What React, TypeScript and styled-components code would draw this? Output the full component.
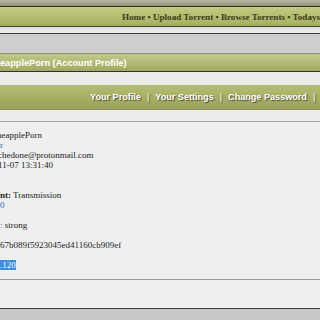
import React from 'react'
import styled, { createGlobalStyle } from 'styled-components'

const GlobalStyle = createGlobalStyle`
	html, body {
		margin: 0;
		padding: 0;
		background: #efefef;
		overflow: hidden;
	}
`

const Page = styled.div`
	width: 320px;
	height: 320px;
	overflow: hidden;
	display: flex;
	flex-direction: column;
	background: #efefef;
`
const TopShade = styled.div`
	height: 6px;
	background: linear-gradient(#b7b8a6, #8e9078);
	border-bottom: 1px solid #2e2e26;
`
const MainNav = styled.nav`
	height: 19px;
	display: flex;
	align-items: center;
	padding-left: 122px;
	white-space: nowrap;
	background: linear-gradient(#c3ca82, #b3bb6c 60%, #a6ae5e);
	border-bottom: 1px solid #45452f;
	font-family: 'Liberation Serif', serif;
	font-weight: bold;
	font-size: 9.1px;
	color: #3a3a22;
`
const Strip = styled.div`
	height: 6px;
	background: linear-gradient(#dcdcdc, #f0f0f0);
	border-bottom: 1px solid #3c3c3c;
`
const GrayBar = styled.div`
	height: 19px;
	background: #cecece;
	border-bottom: 1px solid #8a8b78;
`
const TitleBar = styled.h1`
	margin: 0;
	height: 17px;
	display: flex;
	align-items: center;
	white-space: nowrap;
	background: linear-gradient(#c2c98a, #b0b872 55%, #a1a862);
	border-bottom: 1px solid #33332a;
	font-family: 'Liberation Sans', sans-serif;
	font-size: 9.2px;
	font-weight: bold;
	color: #fff;
`
const Spacer = styled.div<{ $h: number }>`
	height: ${p => p.$h}px;
	background: #ececec;
`
const LinksBar = styled.div`
	height: 24px;
	display: flex;
	align-items: center;
	gap: 6px;
	padding-left: 90px;
	white-space: nowrap;
	background: linear-gradient(#b6be74, #a7af65 50%, #9aa25a);
	border-bottom: 1px solid #8c9262;
	font-family: 'Liberation Sans', sans-serif;
	font-size: 9.1px;
	font-weight: bold;
	color: #fff;
	text-shadow: 1px 1px 1px #4a4a30;
`
const Sep = styled.span`
	font-weight: normal;
`
const Content = styled.div`
	border-top: 1px solid #a9a9a9;
	border-bottom: 1px solid #9a9a9a;
	padding: 8px 0 9px;
	font-family: 'Liberation Serif', serif;
	font-size: 9px;
	line-height: 10px;
	color: #222;
`
const Line = styled.div<{ $shift?: number }>`
	height: 10px;
	white-space: nowrap;
	margin-left: ${p => -(p.$shift ?? 0)}px;
`
const Link = styled.span`
	color: #2b5fae;
`
const Selected = styled.span`
	background: #3a8ee4;
	color: #fff;
`
const Filler = styled.div`
	flex: 1;
	border-bottom: 1px solid #3e3e3e;
`
const Footer = styled.div`
	height: 11px;
	background: #c8c8c8;
`

const App: React.FC = () => {
	return (
		<Page>
			<GlobalStyle />
			<TopShade />
			<MainNav>Home • Upload Torrent • Browse Torrents • Todays Torrents • Forums</MainNav>
			<Strip />
			<GrayBar />
			<TitleBar>eapplePorn (Account Profile)</TitleBar>
			<Spacer $h={13} />
			<LinksBar>
				<span>Your Profile</span>
				<Sep>|</Sep>
				<span>Your Settings</span>
				<Sep>|</Sep>
				<span>Change Password</span>
				<Sep>|</Sep>
				<span>Your Torrents</span>
			</LinksBar>
			<Spacer $h={11} />
			<Content>
				<Line $shift={3}>neapplePorn</Line>
				<Line>
					<Link>r</Link>
				</Line>
				<Line $shift={2}>chedone@protonmail.com</Line>
				<Line $shift={2}>11-07 13:31:40</Line>
				<Line />
				<Line />
				<Line>
					<b>nt:</b> Transmission
				</Line>
				<Line>
					<Link>0</Link>
				</Line>
				<Line />
				<Line>
					<Link>:</Link> strong
				</Line>
				<Line />
				<Line>67b089f5923045ed41160cb909ef</Line>
				<Line />
				<Line>
					<Selected>.120</Selected>
				</Line>
			</Content>
			<Filler />
			<Footer />
		</Page>
	)
}

export default App
